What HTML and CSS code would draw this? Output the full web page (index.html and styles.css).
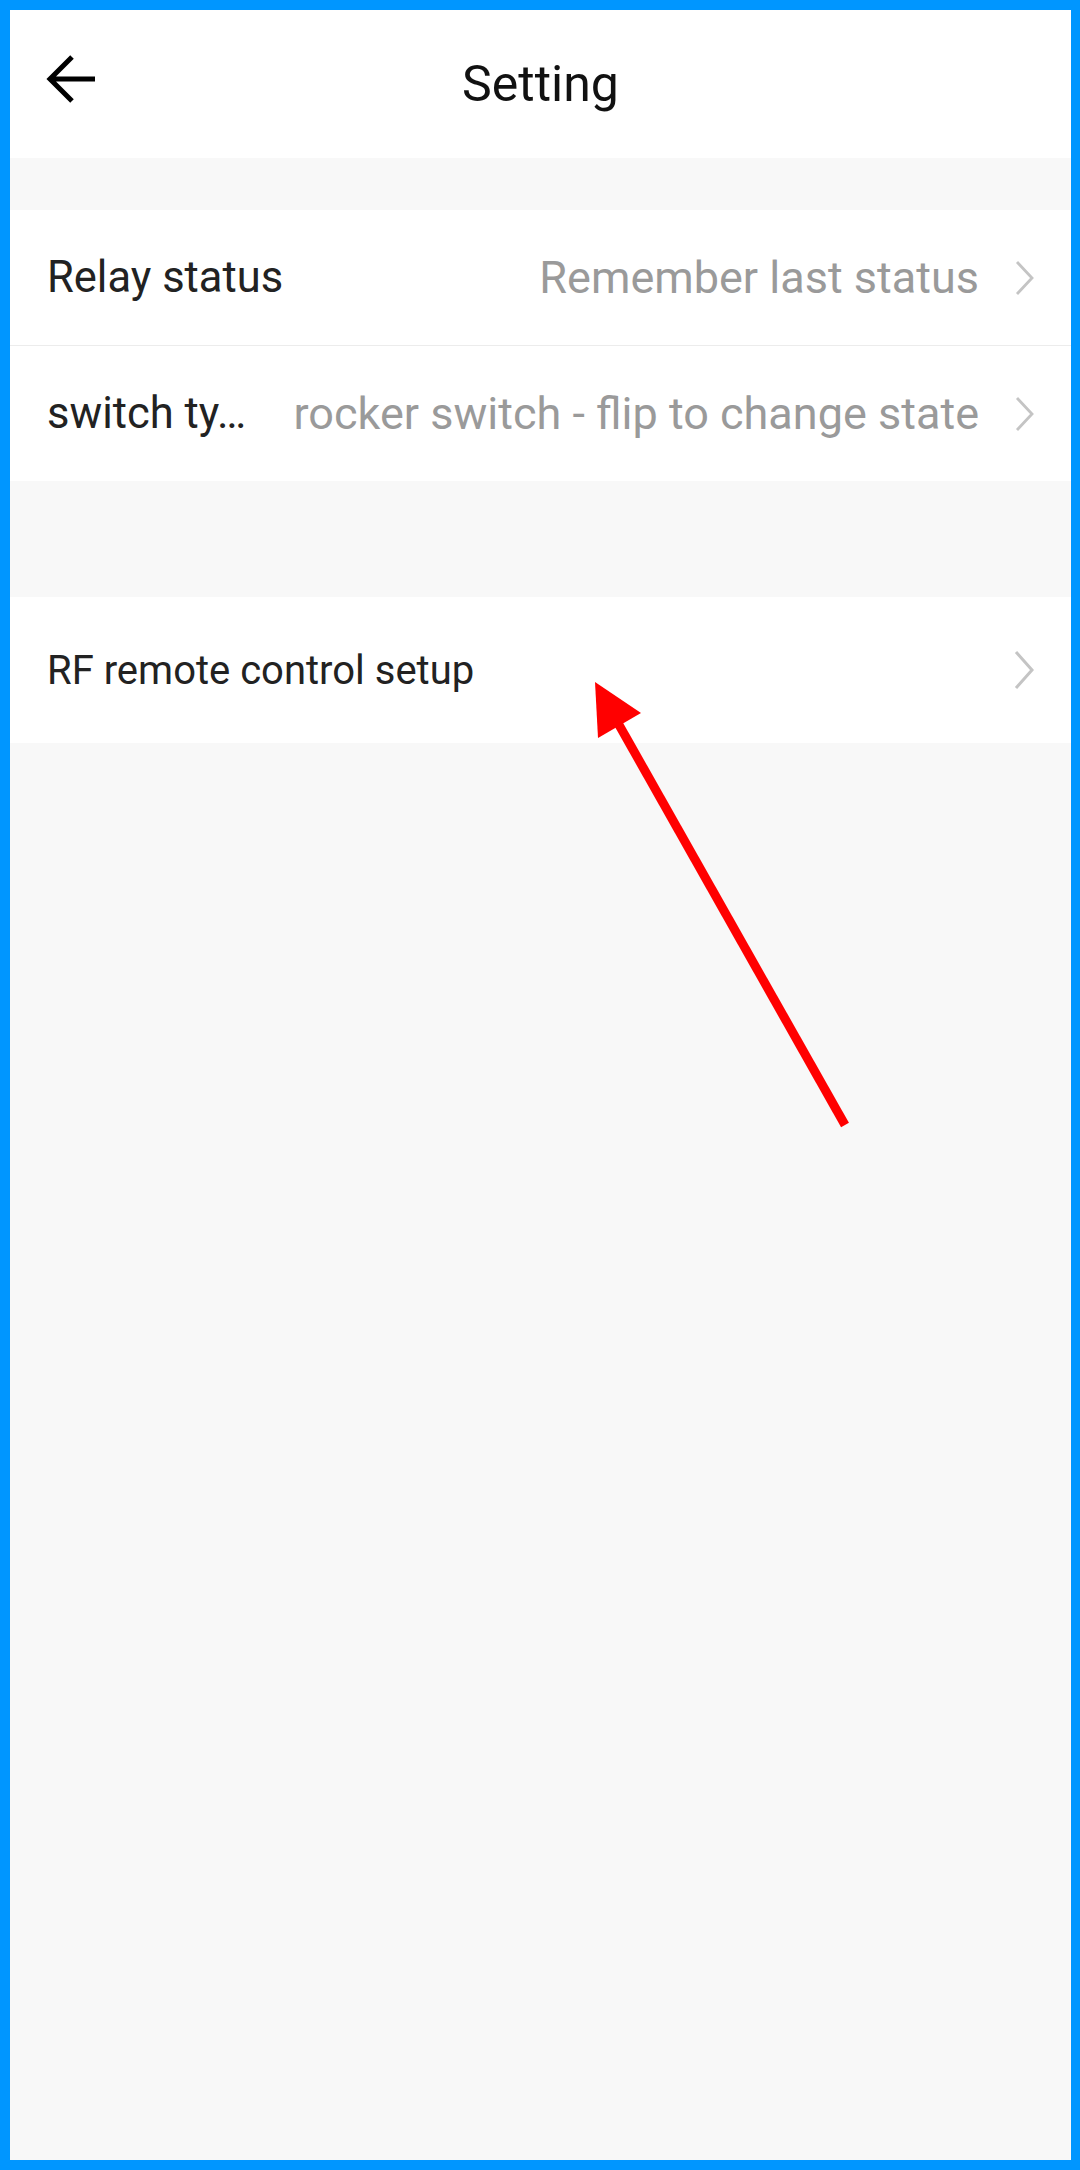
FILE: index.html
```html
<!DOCTYPE html>
<html lang="en">
<head>
    <meta charset="UTF-8">
    <meta name="viewport" content="width=device-width, initial-scale=1.0">
    <title>Setting</title>
    <link rel="stylesheet" href="styles.css">
</head>
<body>
    <div class="frame">
        <div class="header">
            <svg class="back" width="50" height="50" viewBox="0 0 50 50">
                <path d="M49 24 H5 M26 2 L4 24 L26 46" fill="none" stroke="#000" stroke-width="5"/>
            </svg>
            <h1>Setting</h1>
        </div>

        <div class="group group-first">
            <div class="row">
                <span class="label">Relay status</span>
                <span class="value">Remember last status</span>
                <svg class="chev" width="20" height="34" viewBox="0 0 20 34"><path d="M2 1 L17 17 L2 33" fill="none" stroke="#c4c4c4" stroke-width="2.8"/></svg>
            </div>
            <div class="row">
                <span class="label">switch ty…</span>
                <span class="value">rocker switch - flip to change state</span>
                <svg class="chev" width="20" height="34" viewBox="0 0 20 34"><path d="M2 1 L17 17 L2 33" fill="none" stroke="#c4c4c4" stroke-width="2.8"/></svg>
            </div>
        </div>

        <div class="group group-second">
            <div class="row row-tall">
                <span class="label label-small">RF remote control setup</span>
                <svg class="chev" width="22" height="38" viewBox="0 0 22 38"><path d="M3 1 L19 19 L3 37" fill="none" stroke="#c4c4c4" stroke-width="3"/></svg>
            </div>
        </div>

        <svg class="pointer" width="1080" height="2170" viewBox="0 0 1080 2170">
            <line x1="845" y1="1125" x2="614" y2="716" stroke="#ff0000" stroke-width="9"/>
            <polygon points="595,682 641,713 598,738" fill="#ff0000"/>
        </svg>
    </div>
</body>
</html>
```

FILE: styles.css
```css
body { margin: 0; padding: 0; font-family: Roboto, "Noto Sans", sans-serif; }
.frame { position: relative; box-sizing: border-box; width: 1080px; height: 2170px; border: 10px solid #0096ff; border-right-width: 9px; background: #f8f8f8; }
.header { position: relative; height: 148px; background: #fff; display: flex; align-items: center; justify-content: center; }
.header h1 { margin: 0; font-size: 50px; font-weight: 400; color: #111; }
.header .back { position: absolute; left: 36px; top: 45px; }
.group { background: #fff; }
.group-first { margin-top: 52px; }
.group-second { margin-top: 116px; }
.row { display: flex; align-items: center; height: 135px; padding: 0 36px 0 37px; }
.row + .row { border-top: 1px solid #ececec; }
.row-tall { height: 146px; }
.label { font-size: 43.5px; color: #222; white-space: nowrap; }
.label-small { font-size: 40px; }
.value { margin-left: auto; font-size: 45px; color: #9a9a9a; white-space: nowrap; }
.chev { margin-left: 36px; flex-shrink: 0; }
.row-tall .chev { margin-left: auto; }
.pointer { position: absolute; left: -10px; top: -10px; pointer-events: none; }
```
